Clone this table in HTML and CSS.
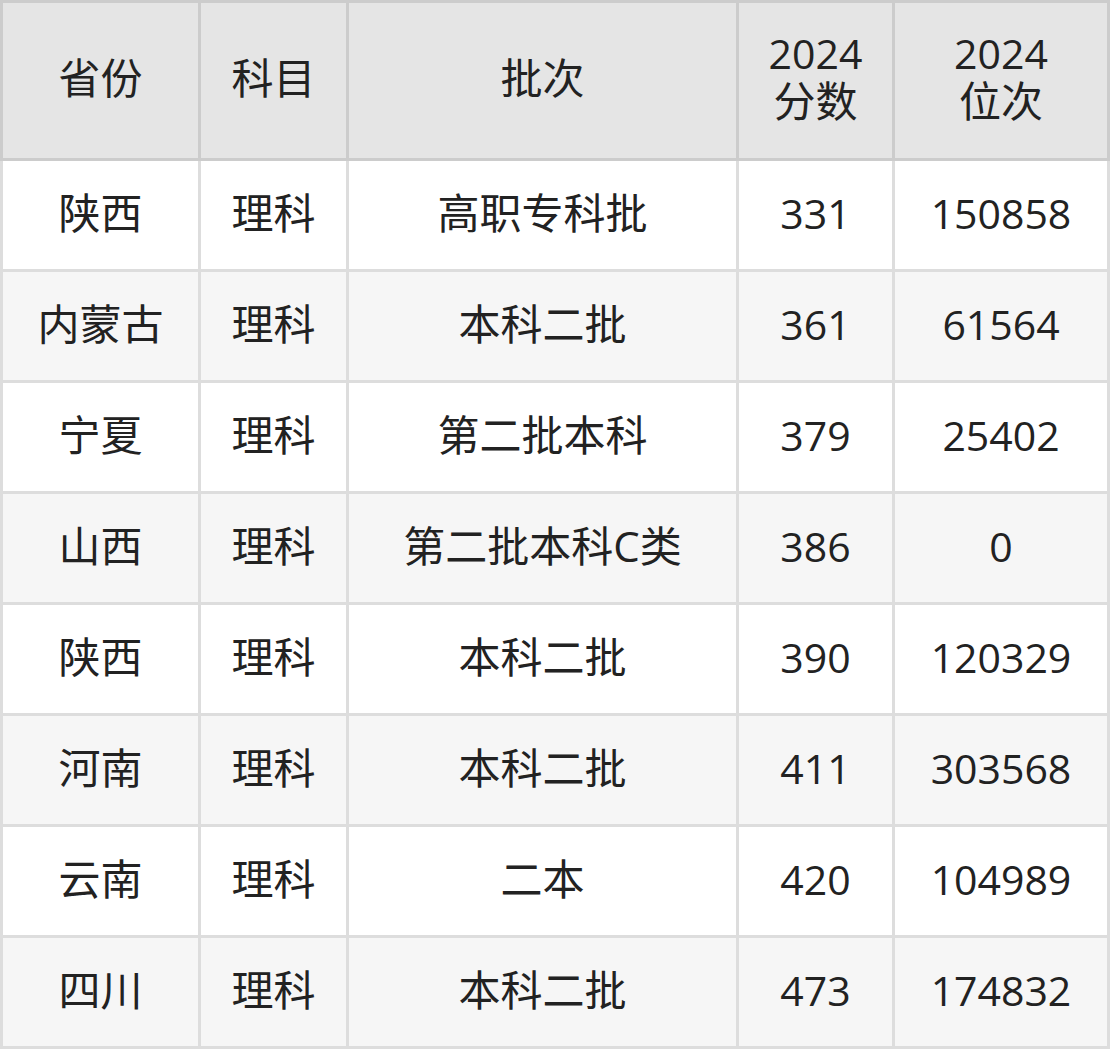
FILE: index.html
```html
<!DOCTYPE html>
<html lang="zh-CN">
<head>
<meta charset="utf-8">
<title>分数位次</title>
<link rel="stylesheet" href="styles.css">
</head>
<body>
<div class="table">
  <div class="row head">
    <div class="cell">省份</div>
    <div class="cell">科目</div>
    <div class="cell">批次</div>
    <div class="cell"><span class="n">2024</span><br>分数</div>
    <div class="cell"><span class="n">2024</span><br>位次</div>
  </div>
  <div class="body">
    <div class="row">
      <div class="cell">陕西</div><div class="cell">理科</div><div class="cell">高职专科批</div><div class="cell n">331</div><div class="cell n">150858</div>
    </div>
    <div class="row alt">
      <div class="cell">内蒙古</div><div class="cell">理科</div><div class="cell">本科二批</div><div class="cell n">361</div><div class="cell n">61564</div>
    </div>
    <div class="row">
      <div class="cell">宁夏</div><div class="cell">理科</div><div class="cell">第二批本科</div><div class="cell n">379</div><div class="cell n">25402</div>
    </div>
    <div class="row alt">
      <div class="cell">山西</div><div class="cell">理科</div><div class="cell">第二批本科C类</div><div class="cell n">386</div><div class="cell n">0</div>
    </div>
    <div class="row">
      <div class="cell">陕西</div><div class="cell">理科</div><div class="cell">本科二批</div><div class="cell n">390</div><div class="cell n">120329</div>
    </div>
    <div class="row alt">
      <div class="cell">河南</div><div class="cell">理科</div><div class="cell">本科二批</div><div class="cell n">411</div><div class="cell n">303568</div>
    </div>
    <div class="row">
      <div class="cell">云南</div><div class="cell">理科</div><div class="cell">二本</div><div class="cell n">420</div><div class="cell n">104989</div>
    </div>
    <div class="row alt">
      <div class="cell">四川</div><div class="cell">理科</div><div class="cell">本科二批</div><div class="cell n">473</div><div class="cell n">174832</div>
    </div>
  </div>
</div>
</body>
</html>
```
FILE: styles.css
```css
html, body {
  margin: 0;
  padding: 0;
  background: #ffffff;
}

body {
  font-family: "Open Sans", "Noto Sans CJK SC", sans-serif;
  font-size: 42px;
  color: #222222;
}

.table {
  width: 1110px;
}

.row {
  display: grid;
  grid-template-columns: 195px 145px 387px 153px 212px;
  column-gap: 3px;
}

.cell {
  display: flex;
  flex-direction: column;
  align-items: center;
  justify-content: center;
  text-align: center;
  box-sizing: border-box;
  height: 108px;
  padding-bottom: 5px;
  background: #ffffff;
  line-height: 46px;
  white-space: nowrap;
}

.n {
  font-size: 41px;
}

.head {
  padding: 3px;
  background: #cccccc;
}

.head .cell {
  display: block;
  height: 155px;
  padding-top: 26px;
  padding-bottom: 0;
  line-height: 48px;
  background: #e5e5e5;
}

.head .cell:nth-child(-n+3) {
  padding-top: 0;
  line-height: 150px;
}

.body {
  display: flex;
  flex-direction: column;
  gap: 3px;
  padding: 0 3px 3px;
  background: #dddddd;
}

.alt .cell {
  background: #f6f6f6;
}
```
